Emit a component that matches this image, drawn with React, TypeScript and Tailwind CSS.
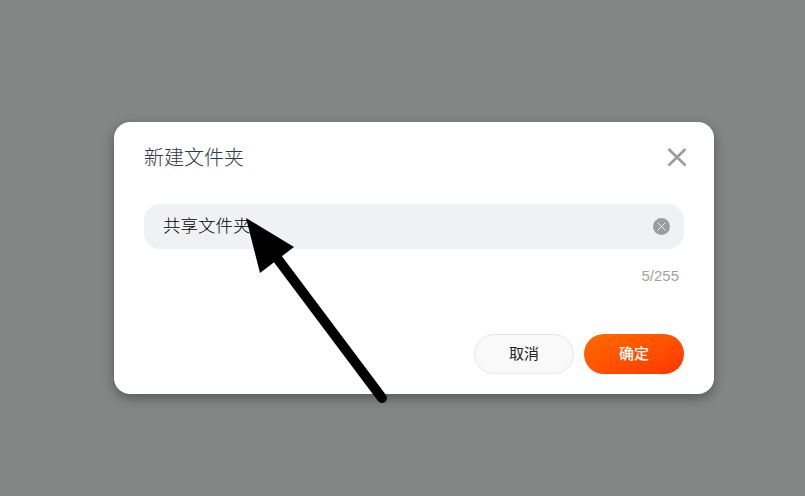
import React from 'react';

const font = { fontFamily: '"Noto Sans CJK SC", "Liberation Sans", sans-serif' };

export default function App() {
  return (
    <div
      className="relative h-[496px] w-[805px] overflow-hidden bg-[#848685] pl-[114px] pt-[122px] font-['Liberation_Sans','Noto_Sans_CJK_SC',sans-serif]"
    >
      {/* dialog */}
      <div className="flex h-[272px] w-[600px] flex-col rounded-2xl bg-white px-[30px] shadow-[0_4px_12px_rgba(0,0,0,0.35)]">
        <div className="flex h-[70px] items-center justify-between">
          <span className="text-[20px] font-light leading-[26px] text-[#2f3a48]" style={font}>新建文件夹</span>
          <svg width="22" height="22" viewBox="0 0 22 22" className="mr-[-4px]">
            <path d="M2.5 3 L19.5 19.5 M19.5 3 L2.5 19.5" stroke="#999b9d" strokeWidth="2.6" fill="none" />
          </svg>
        </div>

        <div className="mt-3 flex h-[45px] items-center justify-between rounded-2xl bg-[#f0f1f3] pl-[19px] pr-[14px]">
          <span className="-mt-0.5 text-[17.5px] font-light text-black" style={font}>共享文件夹</span>
          <svg width="17" height="17" viewBox="0 0 17 17">
            <circle cx="8.5" cy="8.5" r="8.5" fill="#9c9c9e" />
            <path d="M4.5 4.5 L12.5 12.5 M12.5 4.5 L4.5 12.5" stroke="#e8e8ea" strokeWidth="1" fill="none" />
          </svg>
        </div>

        <div className="mt-[18px] pr-[5px] text-right text-[15px] leading-[18px] text-[#a3a3a3]">5/255</div>

        <div className="mt-[49px] flex justify-end gap-[10px]">
          <button className="h-10 w-[100px] rounded-full border border-[#e6e6e6] bg-[#f9f9f9] pb-0.5 text-[15px] text-[#222222]" style={font}>取消</button>
          <button className="h-10 w-[100px] rounded-full bg-gradient-to-br from-[#ff6a00] to-[#ff3300] pb-0.5 text-[15px] font-medium text-white" style={font}>确定</button>
        </div>
      </div>

      {/* annotation arrow on top of the screenshot */}
      <svg width="805" height="496" viewBox="0 0 805 496" className="absolute left-0 top-0">
        <path d="M246 218 L294 247 L260 273 Z" fill="#000" />
        <path d="M274 254 L382 398" stroke="#000" strokeWidth="10" strokeLinecap="round" fill="none" />
      </svg>
    </div>
  );
}
